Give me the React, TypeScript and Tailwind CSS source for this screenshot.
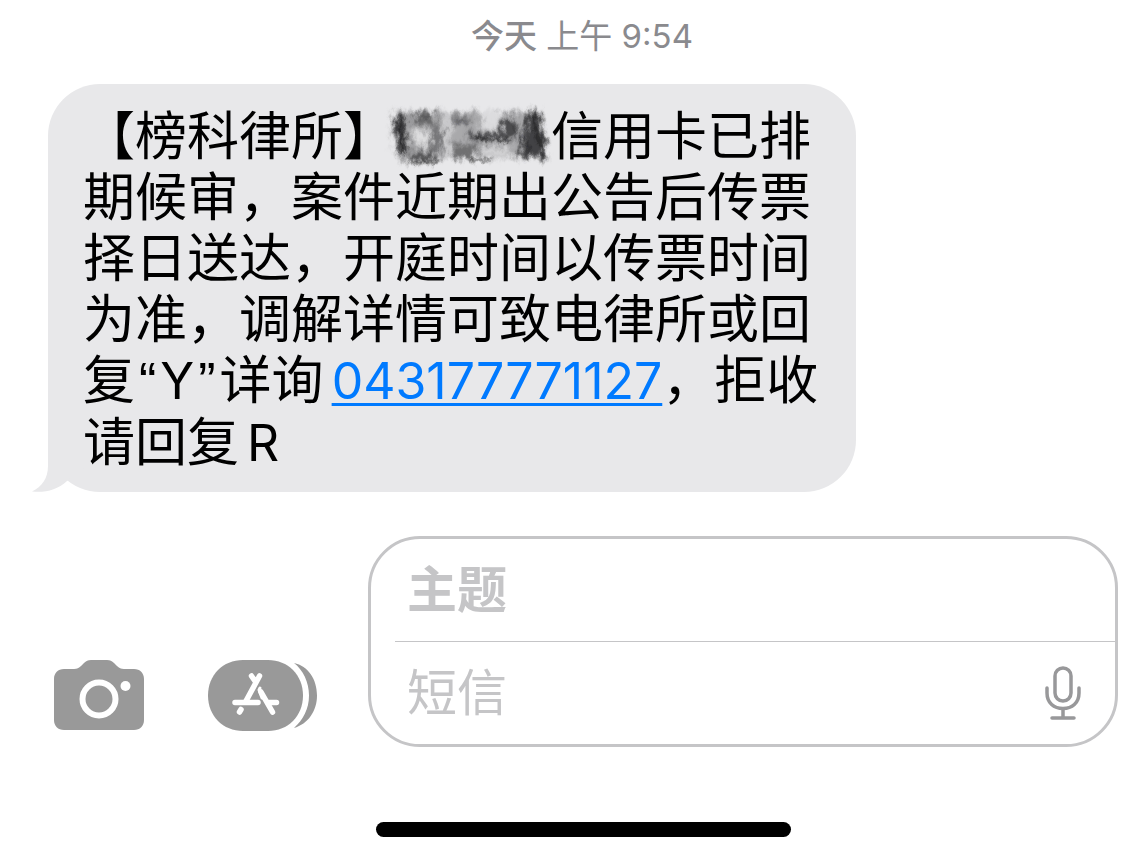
import { useState } from 'react';

function BubbleTail() {
  return (
    <svg
      viewBox="0 0 60 60"
      className="absolute -left-4 bottom-0 h-[60px] w-[60px]"
      fill="#e8e8ea"
      aria-hidden="true"
    >
      <path d="M16 0 V34 C16 46 10 55 0 59.5 C13 61 25 58 35 49 L60 30 V0 Z" />
    </svg>
  );
}

/** 被涂抹的姓名 */
function Redacted() {
  return (
    <svg
      viewBox="0 0 156 48"
      className="inline-block h-12 w-[156px] overflow-visible align-middle"
      role="img"
      aria-label="已涂抹"
    >
      <defs>
        <filter id="smear" x="-10%" y="-20%" width="120%" height="140%">
          <feGaussianBlur stdDeviation="2.5" result="soft" />
          <feTurbulence type="fractalNoise" baseFrequency="0.16 0.09" numOctaves="4" seed="8" result="noise" />
          <feDisplacementMap in="soft" in2="noise" scale="15" xChannelSelector="R" yChannelSelector="G" />
        </filter>
        <filter id="smear-fine" x="-10%" y="-20%" width="120%" height="140%">
          <feGaussianBlur stdDeviation="1" result="soft" />
          <feTurbulence type="fractalNoise" baseFrequency="0.25 0.12" numOctaves="3" seed="3" result="noise" />
          <feDisplacementMap in="soft" in2="noise" scale="8" xChannelSelector="R" yChannelSelector="G" />
        </filter>
      </defs>
      <g transform="translate(-10 -15)">
        <g filter="url(#smear)">
          <path d="M7 12 L28 8 L148 10 L162 54 L60 57 L18 60 L8 44 Z" fill="#a9a9ab" />
          <path d="M8 14 H22 V54 H14 Z" fill="#38383a" />
          <path d="M28 10 H50 V24 H28 Z" fill="#6a6a6c" />
          <path d="M46 24 H58 V50 H46 Z" fill="#777779" />
          <path d="M28 48 H52 V60 H22 Z" fill="#58585a" />
          <ellipse cx="37" cy="36" rx="9" ry="7" fill="#dededf" />
          <path d="M59 8 H65 V58 H59 Z" fill="#d2d2d4" />
          <path d="M68 14 H86 V24 H68 Z" fill="#7c7c7e" />
          <path d="M68 42 H92 V56 H68 Z" fill="#6f6f71" />
          <path d="M94 8 H114 V27 H98 Z" fill="#dcdcde" />
          <path d="M96 45 H124 V53 H96 Z" fill="#d4d4d6" />
          <path d="M82 31 H126 V39 H86 Z" fill="#444446" />
          <path d="M116 16 H132 V36 H116 Z" fill="#4c4c4e" />
          <path d="M144 8 H154 L162 56 H134 L136 40 Z" fill="#434345" />
        </g>
        <g filter="url(#smear-fine)" fill="none" stroke="#1c1c1e" opacity="0.6">
          <path d="M14 18 C18 28 12 36 18 52" strokeWidth="3" />
          <path d="M24 60 H54 M84 58 H106" strokeWidth="2" />
          <path d="M88 34 C102 39 112 38 126 39" strokeWidth="3" />
          <path d="M148 10 C152 22 148 36 160 48" strokeWidth="3" />
          <path d="M138 28 L144 50 M154 28 L160 56" strokeWidth="2" />
          <path d="M124 20 L134 32 M70 20 H84 M34 16 L46 14" strokeWidth="1" />
        </g>
      </g>
    </svg>
  );
}

function CameraIcon() {
  return (
    <svg viewBox="0 0 90 71" className="h-[71px] w-[90px]" aria-hidden="true">
      <path
        fill="#999"
        d="M10 9 H20 C23 9 25 8 27 6 L30 3 C32 1 34 0 37 0 H53 C56 0 58 1 60 3 L63 6 C65 8 67 9 70 9 H80 C86 9 90 13 90 19 V60 C90 66 86 70 80 70 H10 C4 70 0 66 0 60 V19 C0 13 4 9 10 9 Z"
      />
      <circle cx="45" cy="39" r="16.5" fill="none" stroke="#fff" strokeWidth="6" />
      <circle cx="71.5" cy="26" r="5" fill="#fff" />
    </svg>
  );
}

function AppStoreIcon() {
  return (
    <svg viewBox="0 0 110 71" className="h-[71px] w-[110px]" aria-hidden="true">
      <path fill="#999" d="M86 3 C100 6 109 19 109 35.5 C109 51 100 64 86 68 C95 60 101 49 101 35.5 C101 22 95 10 86 3 Z" />
      <path fill="#999" d="M35 0 H60 C80 0 95 15 95 35.5 C95 56 80 71 60 71 H35 C15 71 0 56 0 35.5 C0 15 15 0 35 0 Z" />
      <g fill="none" stroke="#fff" strokeWidth="5.5" strokeLinecap="round" strokeLinejoin="round">
        <path d="M43.5 16 L47 21 M51.5 16 L38 41" />
        <path d="M53 32 L64.5 52" />
        <path d="M52 28 L51 30 L54 38" strokeWidth="3" />
        <path d="M27 42.5 H50 M61 42.5 H68.5" />
        <path d="M33 49.5 L31.5 52" />
      </g>
    </svg>
  );
}

function MicIcon() {
  return (
    <svg
      viewBox="0 0 36 54"
      className="h-[54px] w-9"
      fill="none"
      stroke="#98989a"
      strokeWidth="3.5"
      strokeLinecap="round"
      aria-hidden="true"
    >
      <rect x="10" y="2" width="16" height="33" rx="8" />
      <path d="M2 22 V27 C2 37 9 42.5 18 42.5 C27 42.5 34 37 34 27 V22" />
      <path d="M18 43 V52 M7 52 H29" />
    </svg>
  );
}

export default function App() {
  const [subject, setSubject] = useState('');
  const [message, setMessage] = useState('');

  return (
    <main className="flex flex-col bg-white font-['Inter','Noto_Sans_CJK_SC',sans-serif] text-black">
      <p className="mt-4 pl-[38px] text-center text-[33px] leading-10 text-[#8a8a8e]">
        <span className="font-medium">今天</span> 上午 9:54
      </p>

      <div className="relative mt-7 ml-12 w-full max-w-[808px] rounded-[52px] bg-[#e8e8ea] pt-[22px] pb-[18px] pl-[35px]">
        <BubbleTail />
        <p className="relative text-[52px] leading-[61px] whitespace-nowrap">
          【榜科律所】
          <Redacted />
          信用卡已排
          <br />
          期候审，案件近期出公告后传票
          <br />
          择日送达，开庭时间以传票时间
          <br />
          为准，调解详情可致电律所或回
          <br />
          复<span className="mx-1 font-['Liberation_Sans',sans-serif]">“</span>
          <span className="text-[50px]">Y</span>
          <span className="mx-1 font-['Liberation_Sans',sans-serif]">”</span>详询
          <a
            href="tel:043177771127"
            className="ml-2 text-[50px] text-[#007aff] underline decoration-[3px] underline-offset-4"
          >
            043177771127
          </a>
          ，拒收
          <br />
          请回复<span className="ml-2 text-[50px]">R</span>
        </p>
      </div>

      <form
        className="mt-11 flex items-end pr-2 pl-[54px]"
        onSubmit={(event) => event.preventDefault()}
      >
        <button type="button" aria-label="相机" className="mb-4">
          <CameraIcon />
        </button>
        <button type="button" aria-label="App" className="mb-4 ml-16">
          <AppStoreIcon />
        </button>
        <div className="ml-[50px] min-w-0 flex-1 rounded-[52px] border-[3px] border-[#c5c5c7]">
          <div className="ml-6 border-b border-[#c5c5c7]">
            <input
              aria-label="主题"
              placeholder="主题"
              value={subject}
              onChange={(event) => setSubject(event.target.value)}
              className="block h-[102px] w-full px-3 text-[50px] font-bold outline-none placeholder:text-[#c5c5c7]"
            />
          </div>
          <div className="ml-6 flex items-center pr-[34px]">
            <input
              aria-label="短信"
              placeholder="短信"
              value={message}
              onChange={(event) => setMessage(event.target.value)}
              className="block h-[102px] min-w-0 flex-1 px-3 text-[50px] outline-none placeholder:text-[#c5c5c7]"
            />
            <button type="button" aria-label="语音输入">
              <MicIcon />
            </button>
          </div>
        </div>
      </form>

      <div className="mt-[75px] mb-6 ml-10 h-[15px] w-[415px] self-center rounded-full bg-black" />
    </main>
  );
}
